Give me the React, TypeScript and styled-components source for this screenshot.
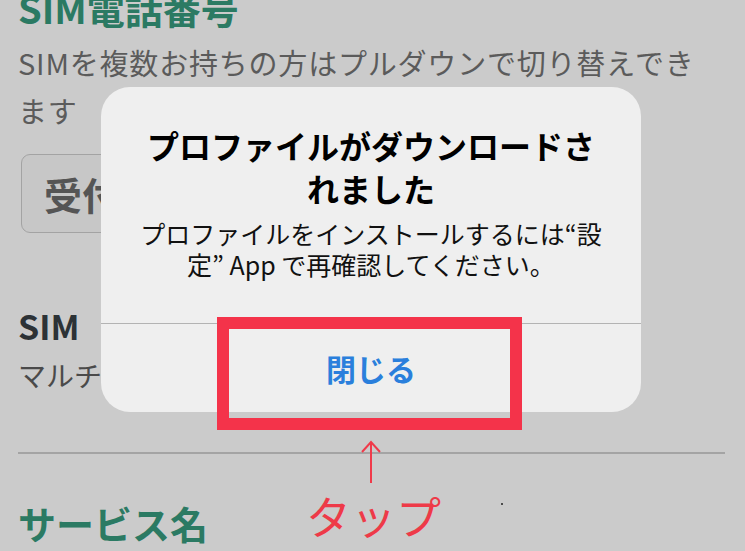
import React from "react";
import styled, { createGlobalStyle } from "styled-components";

const GlobalStyle = createGlobalStyle`
  html, body {
    margin: 0;
    padding: 0;
    background: #cbcbcb;
    overflow: hidden;
  }
  body {
    font-family: "Noto Sans CJK JP", "Noto Sans", sans-serif;
  }
`;

const Screen = styled.div`
  position: relative;
  width: 745px;
  height: 551px;
  overflow: hidden;
  background: #cbcbcb;
`;

const Page = styled.div`
  display: flex;
  flex-direction: column;
  align-items: flex-start;
  padding: 0 20px 0 18px;
  margin-top: -11px;
`;

const SectionTitle = styled.h2`
  margin: 0;
  font-size: 38px;
  line-height: 37px;
  font-weight: 700;
  color: #2b7a63;
`;

const Description = styled.p`
  margin: 12px 0 0;
  max-width: 700px;
  font-size: 29px;
  line-height: 48px;
  font-weight: 400;
  color: #5b5b5b;
  letter-spacing: 0.8px;
`;

const SelectBox = styled.div`
  margin: 20px 0 0 3px;
  width: 300px;
  height: 79px;
  box-sizing: border-box;
  display: flex;
  align-items: center;
  padding-left: 22px;
  border: 1.5px solid #a3a3a3;
  border-radius: 9px;
  background: #c7c7c7;
  font-size: 38px;
  font-weight: 700;
  color: #555555;
`;

const FieldLabel = styled.div`
  margin-top: 73px;
  font-size: 34px;
  line-height: 40px;
  font-weight: 700;
  color: #2c3236;
`;

const FieldText = styled.div`
  margin-top: 9px;
  font-size: 28px;
  line-height: 40px;
  color: #4a4a4a;
`;

const Divider = styled.hr`
  align-self: stretch;
  margin: 57px 0 0;
  border: none;
  height: 2px;
  background: #a4a4a4;
`;

const NextTitle = styled(SectionTitle)`
  margin-top: 47px;
  line-height: 44px;
`;

const Dialog = styled.div`
  position: absolute;
  left: 101px;
  top: 87px;
  width: 540px;
  height: 325px;
  border-radius: 29px;
  background: #efefef;
  display: flex;
  flex-direction: column;
  overflow: hidden;
`;

const DialogBody = styled.div`
  height: 237px;
  box-sizing: border-box;
  padding-top: 37px;
  display: flex;
  flex-direction: column;
  align-items: center;
  text-align: center;
  border-bottom: 1px solid #b3b3b3;
`;

const DialogTitle = styled.div`
  font-size: 32px;
  line-height: 43px;
  font-weight: 700;
  color: #000;
`;

const DialogMessage = styled.div`
  margin-top: 8px;
  font-size: 25px;
  line-height: 31px;
  color: #111;
`;

const DialogButton = styled.div`
  flex: 1;
  display: flex;
  align-items: center;
  justify-content: center;
  font-size: 30px;
  font-weight: 700;
  color: #2a7fdc;
`;

const Highlight = styled.div`
  position: absolute;
  left: 217px;
  top: 317px;
  width: 305px;
  height: 113px;
  box-sizing: border-box;
  border: 12px solid #f4334a;
`;

const Arrow = styled.svg`
  position: absolute;
  left: 361px;
  top: 440px;
`;

const TapLabel = styled.div`
  position: absolute;
  left: 306px;
  top: 483px;
  font-size: 45px;
  line-height: 66px;
  font-weight: 400;
  color: #ee3a48;
`;

const Dot = styled.div`
  position: absolute;
  left: 501px;
  top: 503px;
  width: 2px;
  height: 2px;
  border-radius: 50%;
  background: #222;
`;

export default function App() {
  return (
    <Screen>
      <GlobalStyle />
      <Page>
        <SectionTitle>SIM電話番号</SectionTitle>
        <Description>SIMを複数お持ちの方はプルダウンで切り替えできます</Description>
        <SelectBox>受付</SelectBox>
        <FieldLabel>SIM</FieldLabel>
        <FieldText>マルチ</FieldText>
        <Divider />
        <NextTitle>サービス名</NextTitle>
      </Page>
      <Dialog>
        <DialogBody>
          <DialogTitle>
            プロファイルがダウンロードさ
            <br />
            れました
          </DialogTitle>
          <DialogMessage>
            プロファイルをインストールするには“設
            <br />
            定” App で再確認してください。
          </DialogMessage>
        </DialogBody>
        <DialogButton>閉じる</DialogButton>
      </Dialog>
      <Highlight />
      <Arrow width="20" height="46" viewBox="0 0 20 46">
        <path d="M10 2 V43 M1 12 L10 2 L19 12" fill="none" stroke="#f03a4a" strokeWidth="2" />
      </Arrow>
      <TapLabel>タップ</TapLabel>
      <Dot />
    </Screen>
  );
}
